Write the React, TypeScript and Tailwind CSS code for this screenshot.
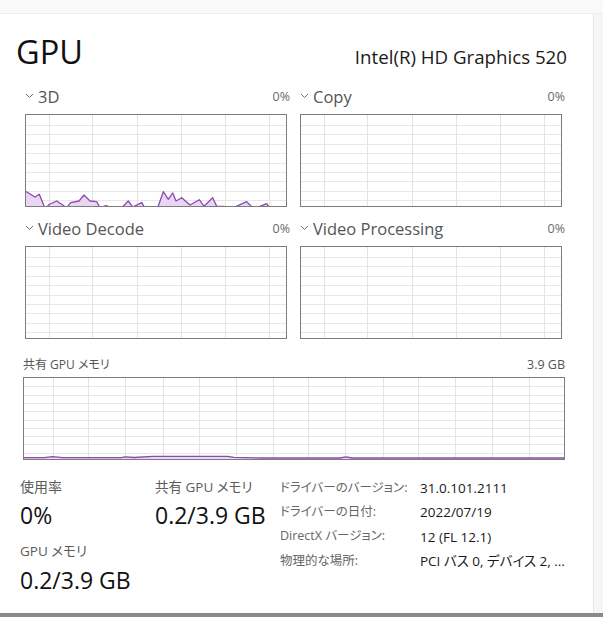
import React from "react";

const FONT = "[font-family:'Open_Sans','Noto_Sans_CJK_JP',sans-serif]";

const SMALL_V = [23, 66, 111, 155, 199, 243];
const SMALL_H = [10, 19, 29, 38, 48, 57, 66, 76, 85];
const BIG_V = [29, 64, 101, 139, 175, 212, 249, 284, 321, 359, 394, 431, 468, 505];
const BIG_H = [8, 17, 25, 33, 42, 50, 58, 66, 75];

const PTS3D: [number, number][] = [
  [0, 76.5], [9, 82], [13.3, 79.3], [19, 93.3], [24, 89], [30.7, 86], [40.7, 92.7], [44.7, 87.7],
  [53, 86], [58, 80], [64, 86], [70.7, 86.7], [74, 92.7], [80, 90.7], [84, 92], [95.7, 92.7],
  [102.3, 86], [106.7, 92], [115.7, 87.7], [119, 93], [129, 93], [132.3, 91], [137.3, 76.7],
  [142.3, 84.3], [146.7, 78], [150, 86], [155.7, 82.7], [164, 90], [173.3, 84.7], [178, 91.3],
  [186.7, 82.7], [190.7, 91.3], [197.3, 91.3], [202.3, 92], [207.3, 92.7], [220.7, 86.7],
  [226.7, 92.7], [232.3, 92], [240.7, 88.7], [243.3, 92.7], [252.3, 92.7], [256, 93],
];

const PTSMEM: [number, number][] = [
  [0, 79.7], [20, 79.7], [28.7, 78.7], [38.7, 79.7], [97, 79.7], [101.3, 78.8], [110, 79.5],
  [128.7, 78.4], [203.7, 78.4], [210, 79.4], [237, 80], [316, 80], [322, 78.8], [328, 80], [542, 80],
];

function Grid({ w, h, vs, hs, pts }: { w: number; h: number; vs: number[]; hs: number[]; pts?: [number, number][] }) {
  const line = pts ? pts.map((p) => `${p[0]},${p[1]}`).join(" ") : "";
  const area = pts ? `0,${h} ${line} ${pts[pts.length - 1][0]},${h}` : "";
  return (
    <svg width={w} height={h} viewBox={`0 0 ${w} ${h}`} className="block">
      {hs.map((y) => (
        <line key={"h" + y} x1={0} x2={w} y1={y + 0.5} y2={y + 0.5} stroke="#e8e8e8" strokeWidth={1} />
      ))}
      {vs.map((x) => (
        <line key={"v" + x} x1={x + 0.5} x2={x + 0.5} y1={0} y2={h} stroke="#e3e3e3" strokeWidth={1} />
      ))}
      {pts && (
        <>
          <polygon points={area} fill="#e8d6f4" />
          <polyline points={line} fill="none" stroke="#8a4aae" strokeWidth={1.3} strokeLinejoin="round" />
        </>
      )}
    </svg>
  );
}

function Chevron() {
  return (
    <svg width="9" height="6" viewBox="0 0 9 6" className="block mr-[4px] mt-[-2px]">
      <polyline points="1,1 4.5,4.5 8,1" fill="none" stroke="#707070" strokeWidth={1} />
    </svg>
  );
}

function Engine({ name, pts }: { name: string; pts?: [number, number][] }) {
  return (
    <div className="flex flex-col">
      <div className="flex h-[22px] items-center justify-between">
        <div className="flex items-center">
          <Chevron />
          <span className="text-[16.5px] text-[#555555] leading-[22px]">{name}</span>
        </div>
        <span className="text-[12.5px] text-[#6a6a6a] leading-[22px]">0%</span>
      </div>
      <div className="mt-[6px] w-[262px] h-[93px] border border-[#7c7c7c] bg-white">
        <Grid w={260} h={91} vs={SMALL_V} hs={SMALL_H} pts={pts} />
      </div>
    </div>
  );
}

export default function App() {
  return (
    <div className={`w-[603px] h-[617px] bg-white relative overflow-hidden flex flex-col ${FONT}`}>
      <div className="h-[14px] bg-[#f9f9f9] border-b border-[#ececec] shrink-0" />
      <div className="flex flex-1 min-h-0">
        <div className="w-[593px] flex flex-col pl-[16px] pr-[26px]">
          <div className="mt-[15px] flex items-baseline justify-between h-[46px]">
            <span className="text-[32.5px] leading-[46px] text-[#111111]">GPU</span>
            <span className="text-[18.7px] leading-[46px] text-[#1a1a1a]">Intel(R) HD Graphics 520</span>
          </div>
          <div className="ml-[9px] mt-[11px] grid grid-cols-[265px_265px] gap-x-[10px]">
            <Engine name="3D" pts={PTS3D} />
            <Engine name="Copy" />
          </div>
          <div className="ml-[9px] mt-[11px] grid grid-cols-[265px_265px] gap-x-[10px]">
            <Engine name="Video Decode" />
            <Engine name="Video Processing" />
          </div>
          <div className="ml-[7px] mt-[17px] w-[542px] flex flex-col">
            <div className="flex h-[18px] items-center justify-between [font-feature-settings:'palt']">
              <span className="text-[12px] text-[#555555]">共有 GPU メモリ</span>
              <span className="text-[12.5px] text-[#555555]">3.9 GB</span>
            </div>
            <div className="mt-[3px] w-[542px] h-[83px] border border-[#7c7c7c] bg-white">
              <Grid w={540} h={81} vs={BIG_V} hs={BIG_H} pts={PTSMEM} />
            </div>
          </div>
          <div className="mt-[17px] ml-[4px] flex [font-feature-settings:'palt']">
            <div className="w-[135px] flex flex-col">
              <div className="h-[20px] leading-[20px] text-[14px] text-[#5c5c5c]">使用率</div>
              <div className="mt-[3px] h-[30px] leading-[30px] text-[23px] text-[#111111]">0%</div>
              <div className="mt-[11px] h-[20px] leading-[20px] text-[13.5px] text-[#5c5c5c]">GPU メモリ</div>
              <div className="mt-[4px] h-[30px] leading-[30px] text-[23px] text-[#111111]">0.2/3.9 GB</div>
            </div>
            <div className="w-[125px] flex flex-col">
              <div className="h-[20px] leading-[20px] text-[13.5px] text-[#5c5c5c]">共有 GPU メモリ</div>
              <div className="mt-[3px] h-[30px] leading-[30px] text-[23px] text-[#111111]">0.2/3.9 GB</div>
            </div>
            <div className="mt-[-1px] grid grid-cols-[140px_auto] auto-rows-[24.3px] items-center">
              <span className="text-[12.5px] text-[#666666]">ドライバーのバージョン:</span>
              <span className="text-[13.5px] text-[#1a1a1a]">31.0.101.2111</span>
              <span className="text-[12.5px] text-[#666666]">ドライバーの日付:</span>
              <span className="text-[13.5px] text-[#1a1a1a]">2022/07/19</span>
              <span className="text-[12.5px] text-[#666666]">DirectX バージョン:</span>
              <span className="text-[13.5px] text-[#1a1a1a]">12 (FL 12.1)</span>
              <span className="text-[12.5px] text-[#666666]">物理的な場所:</span>
              <span className="text-[13.5px] text-[#1a1a1a]">PCI バス 0, デバイス 2, ...</span>
            </div>
          </div>
        </div>
        <div className="flex-1 bg-[#f6f6f6] border-l border-[#e6e6e6]" />
      </div>
      <div className="h-[4px] bg-[#8a8a8a] shrink-0" />
    </div>
  );
}
